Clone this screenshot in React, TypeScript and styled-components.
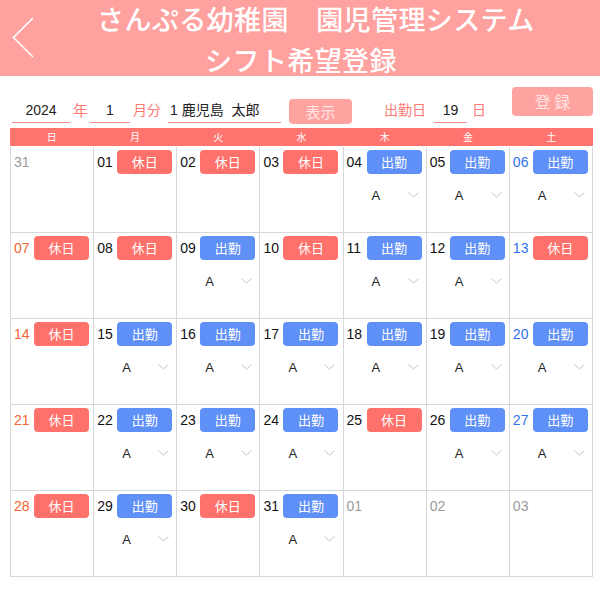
import React from "react";
import styled, { createGlobalStyle } from "styled-components";

const GlobalStyle = createGlobalStyle`
  html, body { margin: 0; padding: 0; background: #ffffff; }
  body { font-family: "Liberation Sans", "Noto Sans CJK JP", sans-serif; color: #222; }
  * { box-sizing: border-box; }
`;

const Page = styled.div`
  width: 600px;
  height: 596px;
  overflow: hidden;
  background: #fff;
`;

const Header = styled.header`
  height: 76px;
  background: #ffa19f;
  display: grid;
  grid-template-columns: 97px 408px 1fr;
  align-items: start;
`;

const BackButton = styled.div`
  padding: 17px 0 0 12px;
  display: flex;
`;

const Title = styled.h1`
  margin: -2px 0 0;
  font-family: "Noto Sans CJK JP", sans-serif;
  font-size: 27px;
  font-weight: 500;
  line-height: 41px;
  color: #fff;
  text-align: center;
  letter-spacing: 0.4px;
`;

const TitleLine = styled.span`
  display: block;
  white-space: nowrap;
`;

const Toolbar = styled.div`
  height: 40px;
  margin-top: 10px;
  padding: 0 7px 0 12px;
  display: flex;
  align-items: flex-end;
`;

const Field = styled.div<{ $w: number; $ml?: number; $align?: string }>`
  width: ${(p) => p.$w}px;
  margin-left: ${(p) => p.$ml ?? 0}px;
  margin-bottom: 3px;
  height: 25px;
  line-height: 24px;
  font-size: 14px;
  color: #222;
  text-align: ${(p) => p.$align ?? "center"};
  padding-left: ${(p) => (p.$align === "left" ? 2 : 0)}px;
  border-bottom: 1px solid #ff8c88;
  white-space: pre;
`;

const Label = styled.span<{ $ml?: number; $size?: number }>`
  margin-left: ${(p) => p.$ml ?? 0}px;
  margin-bottom: 3px;
  height: 25px;
  line-height: 25px;
  font-size: ${(p) => p.$size ?? 14}px;
  color: #ff7a75;
  white-space: nowrap;
`;

const PinkButton = styled.button<{ $w: number; $h: number; $ml?: number; $mb: number; $size: number }>`
  width: ${(p) => p.$w}px;
  height: ${(p) => p.$h}px;
  margin-left: ${(p) => (p.$ml === undefined ? "auto" : `${p.$ml}px`)};
  margin-bottom: ${(p) => p.$mb}px;
  border: none;
  border-radius: 4px;
  background: #ffa3a1;
  color: #ffe4e4;
  font-family: "Noto Sans CJK JP", sans-serif;
  font-size: ${(p) => p.$size}px;
  padding: 0;
  line-height: ${(p) => p.$h}px;
  cursor: pointer;
`;

const Calendar = styled.div`
  margin: 2px 7px 0 10px;
`;

const WeekHead = styled.div`
  display: grid;
  grid-template-columns: repeat(7, 1fr);
  height: 18px;
  background: #ff746f;
`;

const WeekDay = styled.div`
  color: #fff;
  font-family: "Noto Sans CJK JP", sans-serif;
  font-size: 10px;
  line-height: 18px;
  text-align: center;
`;

const Grid = styled.div`
  display: grid;
  grid-template-columns: repeat(7, 1fr);
  grid-auto-rows: 85px;
  gap: 1px;
  margin-top: 1px;
  background: #d7d7d7;
  border: 1px solid #d7d7d7;
  border-top: none;
`;

const Cell = styled.div`
  background: #fff;
  padding: 3px 0 0 3px;
`;

const CellTop = styled.div`
  display: grid;
  grid-template-columns: 20px 55px;
  align-items: center;
  height: 24px;
`;

type Tone = "normal" | "sun" | "sat" | "other";
const toneColor: Record<Tone, string> = {
  normal: "#111",
  sun: "#f5652f",
  sat: "#2f72ec",
  other: "#9a9a9a",
};

const DayNum = styled.span<{ $tone: Tone }>`
  font-size: 14px;
  line-height: 24px;
  color: ${(p) => toneColor[p.$tone]};
`;

const Badge = styled.span<{ $kind: "off" | "on" }>`
  display: block;
  height: 24px;
  border-radius: 4px;
  background: ${(p) => (p.$kind === "off" ? "#ff716b" : "#5f90f8")};
  color: #fff;
  font-family: "Noto Sans CJK JP", sans-serif;
  font-size: 13px;
  line-height: 24px;
  text-align: center;
`;

const SelectRow = styled.div`
  display: flex;
  align-items: center;
  height: 20px;
  margin-top: 11px;
  padding-left: 25px;
`;

const SelectValue = styled.span`
  width: 36px;
  font-size: 13px;
  color: #222;
`;

const Chevron = () => (
  <svg width="11" height="6" viewBox="0 0 11 6">
    <path d="M0.5 0.5 L5.5 5 L10.5 0.5" fill="none" stroke="#c4c4c4" strokeWidth="1" />
  </svg>
);

type Day = { d: string; tone: Tone; kind?: "off" | "on" };

const raw: [string, Tone, "off" | "on" | undefined][] = [
  ["31", "other", undefined], ["01", "normal", "off"], ["02", "normal", "off"], ["03", "normal", "off"], ["04", "normal", "on"], ["05", "normal", "on"], ["06", "sat", "on"],
  ["07", "sun", "off"], ["08", "normal", "off"], ["09", "normal", "on"], ["10", "normal", "off"], ["11", "normal", "on"], ["12", "normal", "on"], ["13", "sat", "off"],
  ["14", "sun", "off"], ["15", "normal", "on"], ["16", "normal", "on"], ["17", "normal", "on"], ["18", "normal", "on"], ["19", "normal", "on"], ["20", "sat", "on"],
  ["21", "sun", "off"], ["22", "normal", "on"], ["23", "normal", "on"], ["24", "normal", "on"], ["25", "normal", "off"], ["26", "normal", "on"], ["27", "sat", "on"],
  ["28", "sun", "off"], ["29", "normal", "on"], ["30", "normal", "off"], ["31", "normal", "on"], ["01", "other", undefined], ["02", "other", undefined], ["03", "other", undefined],
];
const days: Day[] = raw.map(([d, tone, kind]) => ({ d, tone, kind }));

const weekdays = ["日", "月", "火", "水", "木", "金", "土"];

export default function App() {
  return (
    <Page>
      <GlobalStyle />
      <Header>
        <BackButton>
          <svg width="24" height="42" viewBox="0 0 24 42">
            <path d="M21 1 L1.5 20.5 L21 40" fill="none" stroke="#fff" strokeWidth="1.6" />
          </svg>
        </BackButton>
        <Title>
          <TitleLine>さんぷる幼稚園　園児管理システム</TitleLine>
          <TitleLine>シフト希望登録</TitleLine>
        </Title>
      </Header>

      <Toolbar>
        <Field $w={58}>2024</Field>
        <Label $ml={3} $size={15}>年</Label>
        <Field $w={40} $ml={2}>1</Field>
        <Label $ml={3}>月分</Label>
        <Field $w={113} $ml={7} $align="left">{"1 鹿児島  太郎"}</Field>
        <PinkButton $w={63} $h={25} $ml={8} $mb={2} $size={15}>表示</PinkButton>
        <Label $ml={32}>出勤日</Label>
        <Field $w={33} $ml={8}>19</Field>
        <Label $ml={5}>日</Label>
        <PinkButton $w={81} $h={29} $mb={10} $size={16}>登 録</PinkButton>
      </Toolbar>

      <Calendar>
        <WeekHead>
          {weekdays.map((w) => (
            <WeekDay key={w}>{w}</WeekDay>
          ))}
        </WeekHead>
        <Grid>
          {days.map((day, i) => (
            <Cell key={i}>
              <CellTop>
                <DayNum $tone={day.tone}>{day.d}</DayNum>
                {day.kind && <Badge $kind={day.kind}>{day.kind === "off" ? "休日" : "出勤"}</Badge>}
              </CellTop>
              {day.kind === "on" && (
                <SelectRow>
                  <SelectValue>A</SelectValue>
                  <Chevron />
                </SelectRow>
              )}
            </Cell>
          ))}
        </Grid>
      </Calendar>
    </Page>
  );
}
